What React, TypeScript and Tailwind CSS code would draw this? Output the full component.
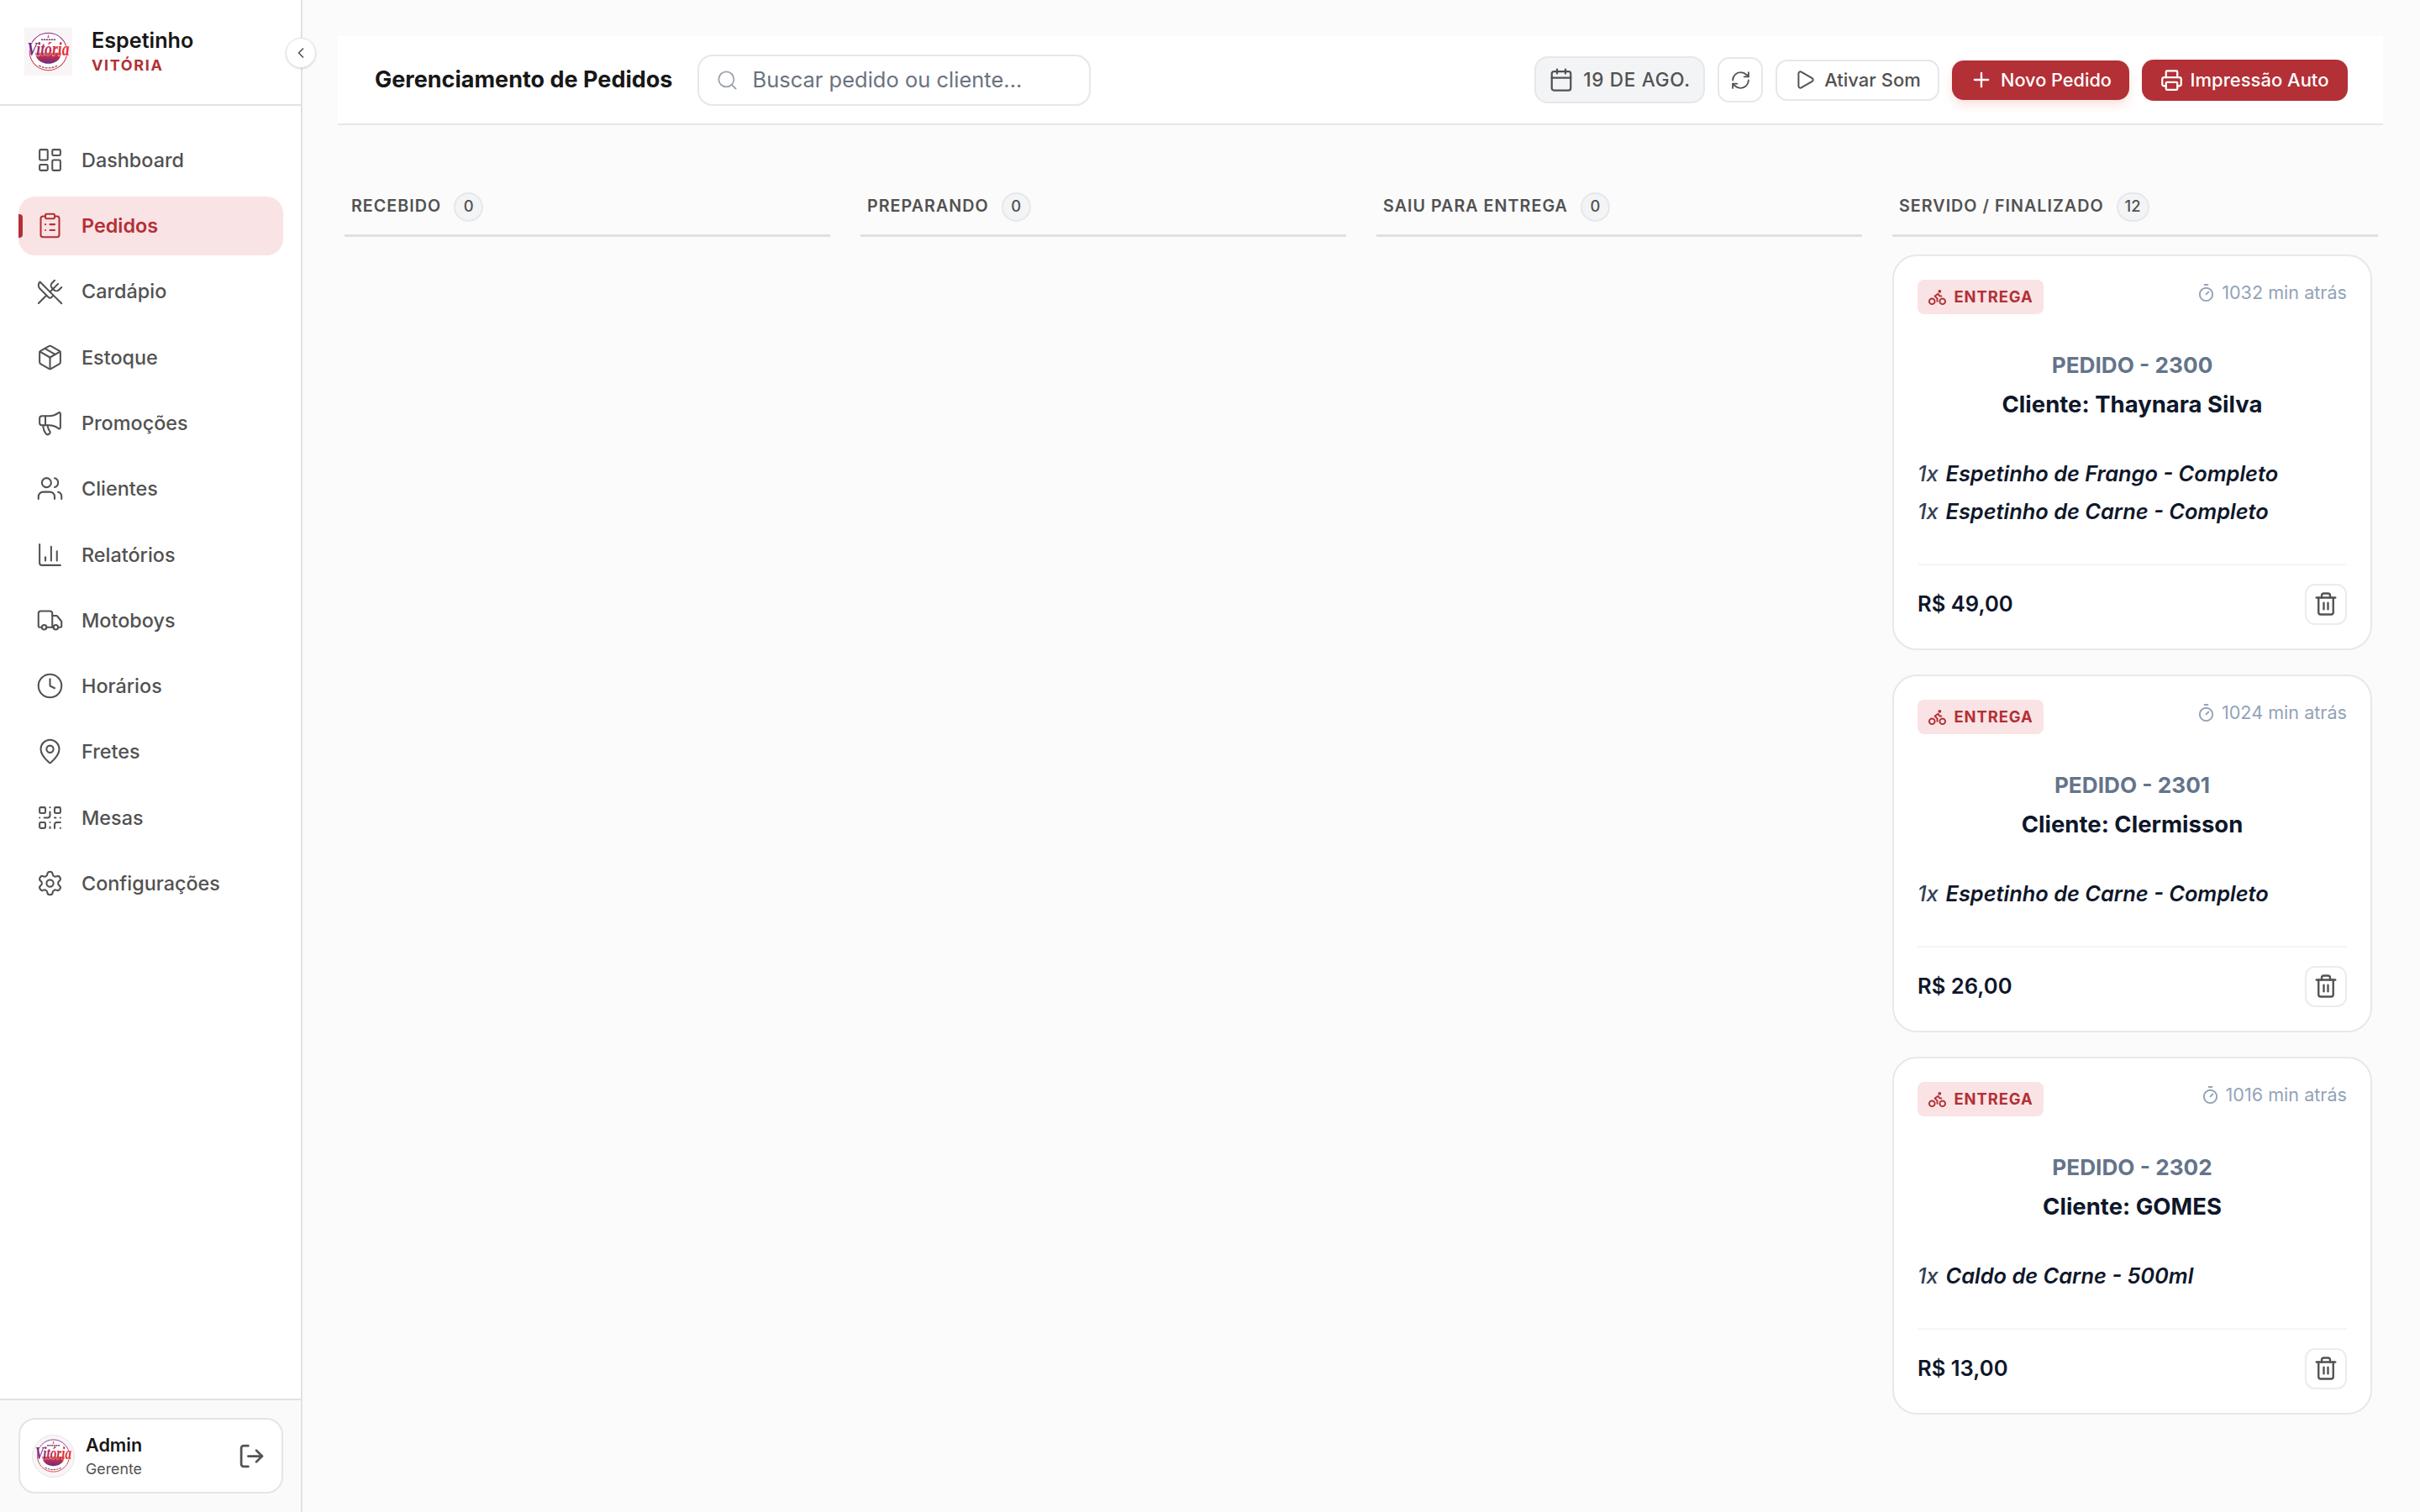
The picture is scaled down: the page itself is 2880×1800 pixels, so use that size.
import {
  Bike,
  Calendar,
  ChartColumn,
  ChevronLeft,
  ClipboardList,
  Clock,
  LayoutDashboard,
  LogOut,
  MapPin,
  Megaphone,
  Package,
  Play,
  Plus,
  Printer,
  QrCode,
  RefreshCw,
  Search,
  Settings,
  Timer,
  Trash2,
  Truck,
  Users,
  UtensilsCrossed,
} from "lucide-react";

const navItems = [
  { label: "Dashboard", icon: LayoutDashboard },
  { label: "Pedidos", icon: ClipboardList, active: true },
  { label: "Cardápio", icon: UtensilsCrossed },
  { label: "Estoque", icon: Package },
  { label: "Promoções", icon: Megaphone },
  { label: "Clientes", icon: Users },
  { label: "Relatórios", icon: ChartColumn },
  { label: "Motoboys", icon: Truck },
  { label: "Horários", icon: Clock },
  { label: "Fretes", icon: MapPin },
  { label: "Mesas", icon: QrCode },
  { label: "Configurações", icon: Settings },
];

const columns = [
  { title: "RECEBIDO", count: 0 },
  { title: "PREPARANDO", count: 0 },
  { title: "SAIU PARA ENTREGA", count: 0 },
  { title: "SERVIDO / FINALIZADO", count: 12 },
];

const orders = [
  {
    id: 2300,
    time: "1032 min atrás",
    client: "Thaynara Silva",
    items: ["Espetinho de Frango - Completo", "Espetinho de Carne - Completo"],
    total: "R$ 49,00",
  },
  {
    id: 2301,
    time: "1024 min atrás",
    client: "Clermisson",
    items: ["Espetinho de Carne - Completo"],
    total: "R$ 26,00",
  },
  {
    id: 2302,
    time: "1016 min atrás",
    client: "GOMES",
    items: ["Caldo de Carne - 500ml"],
    total: "R$ 13,00",
  },
];

function Logo({ id, className }: { id: string; className: string }) {
  return (
    <svg viewBox="0 0 100 100" className={className}>
      <defs>
        <linearGradient id={`${id}-ring`} x1="0" y1="0" x2="0" y2="1">
          <stop offset="0" stopColor="#7a2a8c" />
          <stop offset="1" stopColor="#e2333a" />
        </linearGradient>
        <linearGradient id={`${id}-bowl`} x1="0" y1="0" x2="0" y2="1">
          <stop offset="0" stopColor="#e8352c" />
          <stop offset="1" stopColor="#6d2a86" />
        </linearGradient>
        <linearGradient id={`${id}-word`} x1="0" y1="0" x2="1" y2="0">
          <stop offset="0" stopColor="#5f2690" />
          <stop offset="0.4" stopColor="#b82a55" />
          <stop offset="1" stopColor="#f0352f" />
        </linearGradient>
      </defs>
      <circle cx="50" cy="50" r="39" fill="#fff" stroke={`url(#${id}-ring)`} strokeWidth="1.8" />
      <path d="M23 52 H77 C76 68 63 75 50 75 C37 75 24 68 23 52 Z" fill={`url(#${id}-bowl)`} />
      <path d="M35 25 H65" stroke="#6b3a6e" strokeWidth="2.6" strokeDasharray="4 1.2" />
      <path d="M50 13 l2.2 8 h-4.4 z" fill="#d9606a" />
      <path d="M30 79 Q50 89 70 79" fill="none" stroke="#8a4a60" strokeWidth="2.2" strokeDasharray="5 2" />
      <g transform="translate(50 58) scale(1 1.35)">
        <text
          textAnchor="middle"
          fontFamily="'Liberation Serif', serif"
          fontStyle="italic"
          fontWeight="700"
          fontSize="31"
          fill={`url(#${id}-word)`}
          stroke="#fff"
          strokeWidth="1"
          paintOrder="stroke"
        >
          Vitória
        </text>
      </g>
    </svg>
  );
}

function Sidebar() {
  return (
    <aside className="relative flex h-full w-[360px] shrink-0 flex-col border-r-2 border-[#e2e2e2] bg-white">
      <div className="flex h-[126px] shrink-0 items-center gap-[23px] border-b-2 border-[#e2e2e2] pb-[2px] pl-[29px]">
        <div className="flex h-[57px] w-[57px] items-center justify-center bg-[#f9f5f6]">
          <Logo id="brand" className="h-[57px] w-[57px]" />
        </div>
        <div className="flex flex-col">
          <span className="text-[25.2px] leading-[34px] font-semibold text-[#171717]">Espetinho</span>
          <span className="text-[18px] leading-[26px] font-bold tracking-[0.09em] text-[#b33036]">VITÓRIA</span>
        </div>
      </div>

      <button className="absolute top-[45px] -right-[18px] z-10 flex h-[36px] w-[36px] items-center justify-center rounded-full border border-[#e2e2e2] bg-white shadow-sm">
        <ChevronLeft size={20} strokeWidth={2} className="text-[#525252]" />
      </button>

      <nav className="flex flex-col gap-[8.27px] pt-[29.5px] pr-[21px] pl-[22px]">
        {navItems.map((item) => (
          <a
            key={item.label}
            className={
              item.active
                ? "relative flex h-[70px] items-center gap-[21px] rounded-[20px] bg-[#fae3e4] pl-[21px] text-[23.4px] font-semibold text-[#b33036]"
                : "relative flex h-[70px] items-center gap-[21px] rounded-[20px] pl-[21px] text-[23.4px] font-medium text-[#525252]"
            }
          >
            {item.active && (
              <span className="absolute top-[21px] left-0 h-[28px] w-[5px] rounded-r-[4px] bg-[#b33036]" />
            )}
            <item.icon size={33} strokeWidth={1.5} />
            {item.label}
          </a>
        ))}
      </nav>

      <div className="mt-auto border-t-2 border-[#e2e2e2] bg-[#fafafa] pt-[21px] pr-[21px] pb-[22px] pl-[22px]">
        <div className="flex h-[90px] items-center rounded-[20px] border-2 border-[#e5e5e5] bg-white pr-[19px] pl-[14px]">
          <div className="flex h-[51px] w-[51px] items-center justify-center overflow-hidden rounded-full border border-[#e5e5e5] bg-[#f9f5f6]">
            <Logo id="avatar" className="h-[50px] w-[50px]" />
          </div>
          <div className="ml-[13px] flex flex-col">
            <span className="text-[21.6px] leading-[31px] font-semibold text-[#171717]">Admin</span>
            <span className="text-[17.8px] leading-[26px] text-[#525252]">Gerente</span>
          </div>
          <LogOut size={33} strokeWidth={2} className="ml-auto text-[#525252]" />
        </div>
      </div>
    </aside>
  );
}

function TopBar() {
  return (
    <header className="mr-[44px] ml-[42px] flex h-[106px] shrink-0 items-center justify-between border-b-2 border-[#e5e7eb] bg-white pr-[42px] pl-[44px]">
      <div className="flex items-center gap-[30px]">
        <h1 className="text-[27px] font-bold text-[#171717]">Gerenciamento de Pedidos</h1>
        <div className="flex h-[61px] w-[468px] items-center gap-[16px] rounded-[18px] border-2 border-[#e5e7eb] bg-white px-[20px]">
          <Search size={27} strokeWidth={1.6} className="shrink-0 text-[#9ca3af]" />
          <span className="text-[25.5px] text-[#6b7280]">Buscar pedido ou cliente...</span>
        </div>
      </div>

      <div className="flex items-center gap-[15px]">
        <div className="flex h-[56px] w-[203px] items-center justify-center gap-[11px] rounded-[16px] border-2 border-[#e5e7eb] bg-[#f3f4f6] text-[22.6px] font-medium tracking-[0.03em] text-[#525252]">
          <Calendar size={30} strokeWidth={1.8} />
          19 DE AGO.
        </div>
        <button className="flex h-[54px] w-[54px] items-center justify-center rounded-[14px] border-2 border-[#e5e7eb] bg-white text-[#525252]">
          <RefreshCw size={25} strokeWidth={1.8} />
        </button>
        <button className="flex h-[49px] w-[195px] items-center justify-center gap-[10px] rounded-[14px] border-2 border-[#e5e7eb] bg-white text-[22px] font-medium text-[#525252]">
          <Play size={26} strokeWidth={1.8} />
          Ativar Som
        </button>
        <button className="flex h-[47px] w-[211px] items-center justify-center gap-[9px] rounded-[14px] bg-[#b33036] text-[21.7px] font-medium text-white shadow-[0_6px_12px_rgba(240,110,90,0.2)]">
          <Plus size={28} strokeWidth={2} />
          Novo Pedido
        </button>
        <button className="flex h-[49px] w-[245px] items-center justify-center gap-[9px] rounded-[14px] bg-[#b33036] pr-[1px] text-[22px] font-medium text-white">
          <Printer size={27} strokeWidth={2} />
          Impressão Auto
        </button>
      </div>
    </header>
  );
}

function OrderCard({ order }: { order: (typeof orders)[number] }) {
  return (
    <div className="rounded-[29px] border-2 border-[#e8e8e8] bg-white px-[28px] pt-[28px] pb-[28px]">
      <div className="flex items-start justify-between">
        <span className="flex h-[41px] w-[150px] items-center justify-center gap-[8px] rounded-[8px] bg-[#fae3e4] text-[18.4px] font-bold tracking-[0.05em] text-[#b33036]">
          <Bike size={23} strokeWidth={2} />
          ENTREGA
        </span>
        <span className="flex h-[31px] items-center gap-[7px] text-[21.6px] text-[#94a3b8]">
          <Timer size={23} strokeWidth={2} />
          {order.time}
        </span>
      </div>
      <p className="mt-[43px] text-center text-[26.2px] leading-[36px] font-bold text-[#64748b]">
        PEDIDO - {order.id}
      </p>
      <p className="mt-[10px] text-center text-[27.5px] leading-[36px] font-bold text-[#0f172a]">
        Cliente: {order.client}
      </p>
      <div className="mt-[41.5px]">
        {order.items.map((item) => (
          <p key={item} className="h-[45px] text-[25.4px] leading-[45px] font-semibold text-[#0f172a] italic">
            <span className="mr-[2px] font-medium text-[#334155]">1x </span>
            {item}
          </p>
        ))}
      </div>
      <div className="mt-[40px] flex items-center justify-between border-t-2 border-[#f5f5f5] pt-[22px]">
        <span className="text-[25.6px] font-semibold text-[#0f172a]">{order.total}</span>
        <button className="flex h-[49px] w-[50px] items-center justify-center rounded-[12px] border-2 border-[#ececec] bg-white text-[#525252]">
          <Trash2 size={30} strokeWidth={1.9} />
        </button>
      </div>
    </div>
  );
}

export default function App() {
  return (
    <div className="flex h-screen w-full overflow-hidden bg-[#fbfbfb] font-['Inter',sans-serif]">
      <Sidebar />
      <main className="flex min-w-0 flex-1 flex-col pt-[43px]">
        <TopBar />
        <div className="mt-[64px] mr-[50px] ml-[50px] grid grid-cols-4 gap-[36px]">
          {columns.map((col) => (
            <section key={col.title}>
              <div className="flex h-[69px] items-center gap-[15px] border-b-[3px] border-[#e0e0e0] px-[8px]">
                <h2 className="text-[19.75px] font-semibold tracking-[0.05em] text-[#525252]">{col.title}</h2>
                <span className="flex h-[35px] min-w-[35px] items-center justify-center rounded-full border-2 border-[#e5e7eb] bg-[#f3f4f6] px-[8px] text-[18.4px] font-medium text-[#525252]">
                  {col.count}
                </span>
              </div>
              {col.count > 0 && (
                <div className="mt-[21px] flex flex-col gap-[29.5px] pr-[7px]">
                  {orders.map((order) => (
                    <OrderCard key={order.id} order={order} />
                  ))}
                </div>
              )}
            </section>
          ))}
        </div>
      </main>
    </div>
  );
}
